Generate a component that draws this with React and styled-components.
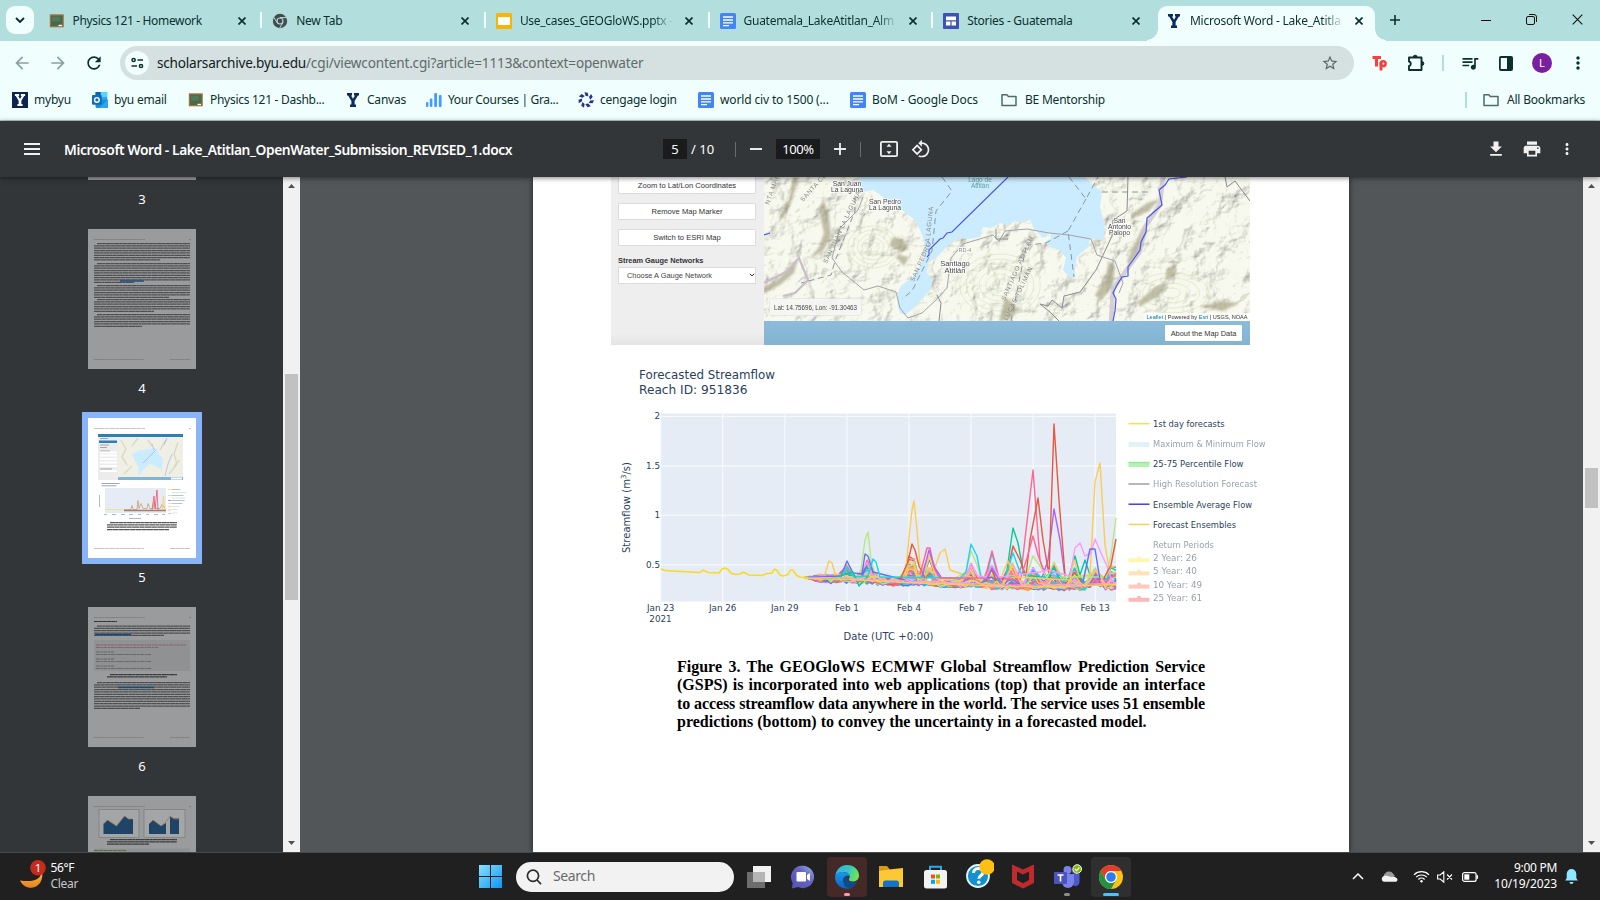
import React from 'react';
import styled, { createGlobalStyle, css } from 'styled-components';

const UI = '"Noto Sans", "Open Sans", sans-serif';
const DARK = '#0b302e';

const Global = createGlobalStyle`
  * { box-sizing: border-box; }
  body { margin: 0; overflow: hidden; font-family: ${UI}; }
  svg { display: block; flex: none; }
`;

const Screen = styled.div`
  width: 1600px;
  height: 900px;
  display: flex;
  flex-direction: column;
  overflow: hidden;
  background: #525659;
`;

/* A single line of text in a box of known width */
const Text = styled.span`
  flex: none;
  width: ${(p) => (p.$w ? `${p.$w}px` : 'auto')};
  white-space: nowrap;
  font-size: ${(p) => p.$size || 12}px;
  letter-spacing: ${(p) => p.$ls || 0}px;
  color: ${(p) => p.$color || DARK};
  line-height: 1.3;
  ${(p) => p.$fade && css`
    mask-image: linear-gradient(90deg, #000 86%, transparent 100%);
  `}
`;

/* ---------- tab strip ---------- */
const TabStrip = styled.div`
  height: 41px;
  flex: none;
  display: flex;
  background: #b2dfdd;
  padding-left: 6px;
`;
const TabSearch = styled.div`
  width: 28px;
  height: 28px;
  flex: none;
  margin: 6px 3.5px 0 0;
  border-radius: 9px;
  background: #f0fffe;
  display: flex;
  align-items: center;
  justify-content: center;
`;
const Tab = styled.div`
  position: relative;
  flex: none;
  width: ${(p) => (p.$active ? 217 : 223.7)}px;
  height: ${(p) => (p.$active ? 35 : 28)}px;
  margin-top: 6px;
  margin-left: ${(p) => (p.$active ? 2 : 0)}px;
  padding: 1px 12px 0 ${(p) => (p.$active ? 8 : 11)}px;
  display: flex;
  align-items: center;
  ${(p) => p.$active && css`
    background: #f0fffe;
    border-radius: 9px 9px 0 0;
    padding-bottom: 7px;
    &::before, &::after {
      content: '';
      position: absolute;
      bottom: 0;
      width: 11px;
      height: 12px;
    }
    &::before { left: -11px; background: radial-gradient(circle at 0 0, transparent 10.5px, #f0fffe 11px); }
    &::after { right: -11px; background: radial-gradient(circle at 100% 0, transparent 10.5px, #f0fffe 11px); }
  `}
`;
const TabIcon = styled.div`
  width: 16px;
  height: 16px;
  margin-right: 8px;
  flex: none;
`;
const TabClose = styled.div`
  margin-left: auto;
  width: 12px;
  flex: none;
  margin-right: ${(p) => (p.$active ? -4 : -0.5)}px;
`;
const TabRule = styled.div`
  position: absolute;
  right: -1px;
  top: 6px;
  width: 2px;
  height: 16px;
  background: #f0fffe;
`;
const NewTab = styled.div`
  width: 10px;
  flex: none;
  margin: 15px 63px 0 15px;
`;
const WindowButton = styled.div`
  width: 46px;
  flex: none;
  padding-top: 14px;
  display: flex;
  justify-content: center;
`;

/* ---------- navigation bar ---------- */
const NavBar = styled.div`
  height: 39px;
  flex: none;
  display: flex;
  align-items: center;
  background: #f0fffe;
  padding: 5px 0 0 12px;
`;
const NavIcon = styled.div`
  flex: none;
  width: ${(p) => p.$w || 36}px;
  display: flex;
  justify-content: ${(p) => p.$align || 'flex-start'};
`;
const Omnibox = styled.div`
  width: 1234px;
  flex: none;
  height: 34px;
  border-radius: 17px;
  background: #d5e1e0;
  display: flex;
  align-items: center;
  padding: 0 15px 0 5px;
`;
const SiteInfo = styled.div`
  width: 24px;
  height: 24px;
  border-radius: 50%;
  background: #f0fffe;
  margin-right: 8px;
  display: flex;
  align-items: center;
  justify-content: center;
`;
const StarSlot = styled.div`
  margin-left: auto;
`;
const Rule = styled.div`
  width: 2px;
  height: 16px;
  background: #b2dfdd;
`;
const Avatar = styled.div`
  width: 20px;
  height: 20px;
  border-radius: 50%;
  background: #7b1fa2;
  color: #fff;
  font-size: 11px;
  line-height: 20px;
  text-align: center;
`;

/* ---------- bookmarks ---------- */
const BookmarkBar = styled.div`
  height: 41px;
  flex: none;
  display: flex;
  align-items: center;
  padding: 0 14px 1px 12px;
  background: #f0fffe;
  border-bottom: 1px solid #b5cfcd;
`;
const Bookmark = styled.div`
  display: flex;
  align-items: center;
  gap: ${(p) => p.$gap || 6}px;
  margin-right: 21px;
`;
const BookmarkEnd = styled.div`
  margin-left: auto;
  display: flex;
  align-items: center;
  gap: 8px;
  ${Rule} { margin-right: 8px; }
`;

/* ---------- PDF viewer ---------- */
const PdfBar = styled.div`
  height: 56px;
  flex: none;
  display: flex;
  align-items: center;
  background: #323639;
  padding: 0 24px;
  box-shadow: 0 1px 5px rgba(0, 0, 0, 0.5);
  z-index: 2;
`;
const PdfTitle = styled.div`
  width: 599px;
  margin-left: 24px;
`;
const PdfTitleText = styled(Text)`
  font-weight: 600;
`;
const PdfField = styled.div`
  width: ${(p) => p.$w}px;
  height: 20px;
  background: #191b1c;
  display: flex;
  align-items: center;
  justify-content: center;
`;
const PdfRule = styled.div`
  width: 1px;
  height: 15px;
  margin: 0 ${(p) => p.$r}px 0 ${(p) => p.$l}px;
  background: #6a6d70;
`;
const PdfActions = styled.div`
  margin-left: auto;
  display: flex;
  align-items: center;
  gap: 16px;
`;
const Gap = styled.div`
  width: ${(p) => p.$w}px;
`;

const Viewer = styled.div`
  flex: 1;
  min-height: 0;
  display: flex;
`;
const ThumbRail = styled.div`
  width: 284px;
  margin-right: -1px;
  background: #323639;
  overflow: hidden;
  display: flex;
  flex-direction: column;
  align-items: center;
`;
const ThumbCell = styled.div`
  height: 189px;
  flex: none;
  display: flex;
  flex-direction: column;
  align-items: center;
  margin-top: ${(p) => p.$shift || 0}px;
`;
const ThumbPage = styled.div`
  width: 108px;
  height: 140px;
  background: ${(p) => (p.$current ? '#fff' : '#999b9c')};
  ${(p) => p.$current && css`box-shadow: 0 0 0 6px #8ab4f8;`}
`;
const ThumbLabel = styled.div`
  height: 49px;
  padding-top: 10px;
  font-size: 13px;
  line-height: 19px;
  color: #fff;
`;
const ScrollTrack = styled.div`
  width: 17px;
  flex: none;
  position: relative;
  background: #f1f1f1;
  display: flex;
  flex-direction: column;
  align-items: center;
  justify-content: space-between;
  padding: 7px 0;
`;
const ScrollThumb = styled.div`
  width: 13px;
  height: ${(p) => p.$h}px;
  margin-top: ${(p) => p.$top}px;
  margin-bottom: auto;
  background: #c1c1c1;
`;
const Canvas = styled.div`
  flex: 1;
  background: #525659;
  overflow: hidden;
  padding-left: 233px;
`;
const Paper = styled.div`
  width: 816px;
  height: 675px;
  background: #fff;
  box-shadow: 0 0 6px rgba(0, 0, 0, 0.6);
  padding-left: 78px;
`;

/* ---------- figure: web map ---------- */
const MapApp = styled.div`
  width: 639px;
  height: 168px;
  display: flex;
  font-family: "Liberation Sans", Arial, sans-serif;
`;
const MapSide = styled.div`
  width: 153px;
  height: 168px;
  overflow: hidden;
  background: linear-gradient(#eeeeee 93%, #e4e4e4);
  padding: 0 8px 0 7px;
  display: flex;
  flex-direction: column;
`;
const MapButton = styled.div`
  height: 17px;
  flex: none;
  margin-bottom: 9px;
  background: #fff;
  border: 1px solid #dcdcdc;
  border-radius: 1px;
  font-size: 7.6px;
  line-height: 15px;
  text-align: center;
  color: #333;
  ${(p) => p.$first && css`border-top: 0; height: 16.5px; line-height: 17.5px;`}
`;
const MapLabel = styled.div`
  font-size: 7.4px;
  font-weight: bold;
  line-height: 9px;
  margin-top: 1px;
  color: #333;
`;
const MapSelect = styled.div`
  height: 17px;
  flex: none;
  margin-top: 2px;
  background: #fff;
  border: 1px solid #dcdcdc;
  font-size: 7.4px;
  line-height: 15px;
  color: #444;
  padding: 0 0 0 8px;
  display: flex;
  align-items: center;
  justify-content: space-between;
`;
const MapMain = styled.div`
  width: 486px;
`;
const MapFooter = styled.div`
  height: 24px;
  background: linear-gradient(#8bbcdb, #82b4d2);
  display: flex;
  align-items: center;
  justify-content: flex-end;
  padding-right: 8px;
`;
const AboutButton = styled.div`
  width: 77px;
  height: 16px;
  border-radius: 1px;
  background: #fff;
  font-size: 7.4px;
  line-height: 17px;
  text-align: center;
  color: #333;
`;

const Caption = styled.p`
  width: 528px;
  margin: 7px 0 0 66px;
  font: bold 16px/18.4px "Liberation Serif", "Times New Roman", serif;
  color: #000;
`;
const CaptionLine = styled.span`
  display: block;
  white-space: nowrap;
  letter-spacing: ${(p) => (p.$tight ? -0.11 : 0)}px;
  text-align: justify;
  text-align-last: ${(p) => (p.$last ? 'left' : 'justify')};
`;

/* ---------- taskbar ---------- */
const Taskbar = styled.div`
  height: 48px;
  flex: none;
  display: flex;
  align-items: center;
  background: #202020;
  border-top: 1px solid #474747;
`;
const Weather = styled.div`
  width: 470px;
  display: flex;
  align-items: center;
  padding-left: 18px;
  gap: 4.5px;
`;
const Stack = styled.div`
  display: flex;
  flex-direction: column;
  padding-bottom: 2px;
  align-items: ${(p) => p.$align || 'flex-start'};
`;
const StartSlot = styled.div`
  width: 46px;
  padding-left: 9px;
`;
const SearchPill = styled.div`
  width: 218px;
  height: 30px;
  border-radius: 15px;
  background: #f2f2f2;
  display: flex;
  align-items: center;
  padding-left: 10px;
  gap: 11px;
  margin-right: 5px;
`;
const TaskItem = styled.div`
  position: relative;
  width: 40px;
  height: 40px;
  margin-right: 4px;
  border-radius: 4px;
  display: flex;
  align-items: center;
  justify-content: center;
  background: ${(p) => p.$bg || 'transparent'};
  ${(p) => p.$mark && css`
    &::after {
      content: '';
      position: absolute;
      bottom: 1px;
      left: 50%;
      width: ${p.$mw || 6}px;
      height: 3px;
      margin-left: -${(p.$mw || 6) / 2}px;
      border-radius: 2px;
      background: ${p.$mark};
    }
  `}
`;
const Tray = styled.div`
  margin-left: auto;
  display: flex;
  align-items: center;
  padding-right: 22px;
`;

/* ---------- icons ---------- */
const Glyph = ({ d, size = 20, fill = DARK }) => (
  <svg width={size} height={size} viewBox="0 0 24 24" fill={fill}><path d={d} /></svg>
);
const PATH = {
  back: 'M20 11H7.83l5.59-5.59L12 4l-8 8 8 8 1.41-1.41L7.83 13H20v-2z',
  forward: 'M12 4l-1.41 1.41L16.17 11H4v2h12.17l-5.58 5.59L12 20l8-8z',
  reload: 'M17.65 6.35C16.2 4.9 14.21 4 12 4c-4.42 0-7.99 3.58-7.99 8s3.57 8 7.99 8c3.73 0 6.84-2.55 7.73-6h-2.08c-.82 2.33-3.04 4-5.65 4-3.31 0-6-2.69-6-6s2.69-6 6-6c1.66 0 3.14.69 4.22 1.78L13 11h7V4l-2.35 2.35z',
  star: 'M22 9.24l-7.19-.62L12 2 9.19 8.63 2 9.24l5.46 4.73L5.82 21 12 17.27 18.18 21l-1.63-7.03L22 9.24zM12 15.4l-3.76 2.27 1-4.28-3.32-2.88 4.38-.38L12 6.1l1.71 4.04 4.38.38-3.32 2.88 1 4.28L12 15.4z',
  queue: 'M15 6H3v2h12V6zm0 4H3v2h12v-2zM3 16h8v-2H3v2zM17 6v8.18c-.31-.11-.65-.18-1-.18-1.66 0-3 1.34-3 3s1.34 3 3 3 3-1.34 3-3V8h3V6h-5z',
  download: 'M19 9h-4V3H9v6H5l7 7 7-7zM5 18v2h14v-2H5z',
  print: 'M19 8H5c-1.66 0-3 1.34-3 3v6h4v4h12v-4h4v-6c0-1.66-1.34-3-3-3zm-3 11H8v-5h8v5zm3-7c-.55 0-1-.45-1-1s.45-1 1-1 1 .45 1 1-.45 1-1 1zm-1-9H6v4h12V3z',
  rotate: 'M7.34 6.41L.86 12.9l6.49 6.48 6.49-6.48-6.5-6.49zM3.69 12.9l3.66-3.66L11 12.9l-3.66 3.66-3.65-3.66zm15.67-6.26C17.61 4.88 15.3 4 13 4V.76L8.76 5 13 9.24V6c1.79 0 3.58.68 4.95 2.05 2.73 2.73 2.73 7.17 0 9.9C16.58 19.32 14.79 20 13 20c-.97 0-1.94-.21-2.84-.61l-1.49 1.49C10.02 21.62 11.51 22 13 22c2.3 0 4.61-.88 6.36-2.64 3.52-3.51 3.52-9.21 0-12.72z',
  dots: 'M12 8c1.1 0 2-.9 2-2s-.9-2-2-2-2 .9-2 2 .9 2 2 2zm0 2c-1.1 0-2 .9-2 2s.9 2 2 2 2-.9 2-2-.9-2-2-2zm0 6c-1.1 0-2 .9-2 2s.9 2 2 2 2-.9 2-2-.9-2-2-2z',
};

const Board = () => (
  <svg width="16" height="16" viewBox="0 0 16 16">
    <rect x=".8" y="1.3" width="14" height="13" fill="#a9713f" />
    <rect x="2" y="2.6" width="11.6" height="10.4" fill="#466b4b" />
    <rect x="3" y="3.6" width="8" height="5" fill="#54785a" />
    <rect x="9.5" y="11.8" width="3.5" height="1.3" fill="#fff" />
  </svg>
);
const ChromeGray = () => (
  <svg width="16" height="16" viewBox="0 0 16 16">
    <circle cx="8" cy="8" r="7.2" fill="#474a4d" />
    <path d="M8 4.6h6.6M5.1 9.7L1.9 4.2M10.9 9.7l-3.3 5.5" stroke="#b2dfdd" strokeWidth="1" />
    <circle cx="8" cy="8" r="3.5" fill="#b2dfdd" />
    <circle cx="8" cy="8" r="2.4" fill="#474a4d" />
  </svg>
);
const Slides = () => (
  <svg width="16" height="16" viewBox="0 0 16 16">
    <rect width="16" height="16" rx="1.5" fill="#f8b400" />
    <rect x="2" y="4" width="12" height="8" fill="#fff" />
  </svg>
);
const Docs = () => (
  <svg width="16" height="16" viewBox="0 0 16 16">
    <rect width="16" height="16" rx="1.5" fill="#4285f4" />
    <path d="M3 4h10M3 7h10M3 9.9h10M3 12.6h6" stroke="#fff" strokeWidth="1.4" />
  </svg>
);
const Sites = () => (
  <svg width="16" height="16" viewBox="0 0 16 16">
    <rect width="16" height="16" rx="1" fill="#3f51b5" />
    <path d="M3 3.5h10v3.8H3zM3 8.6h4.4v4H3zM8.6 8.6H13v4H8.6z" fill="#fff" />
  </svg>
);
const YShape = ({ fill, transform }) => (
  <path transform={transform} fill={fill} d="M2 1h5v2.4H6l2 3.4 2-3.4H9V1h5v2.4h-1.1L9.6 9v3.6H11V15H5v-2.4h1.4V9L3.1 3.4H2z" />
);
const YLogo = () => <svg width="16" height="16" viewBox="0 0 16 16"><YShape fill="#0b2a5e" /></svg>;
const YBox = () => (
  <svg width="16" height="16" viewBox="0 0 16 16">
    <rect width="16" height="16" fill="#0b2452" />
    <YShape fill="#fff" transform="translate(1.2 1.2) scale(.85)" />
  </svg>
);
const Outlook = () => (
  <svg width="16" height="16" viewBox="0 0 16 16">
    <path d="M3.5 0h11.7v9H3.5z" fill="#28a8ea" />
    <path d="M3.5 0h5v5h-5z" fill="#0a64ad" />
    <path d="M9 0h6.2v5H9z" fill="#50d9ff" />
    <path d="M3.5 8.5L16 7.6V16H4.5l-1-1z" fill="#1490df" />
    <path d="M16 7.6L7 16h9z" fill="#28a8ea" />
    <rect y="3" width="9.8" height="9.8" rx="1" fill="#0f6cbd" />
    <circle cx="4.9" cy="7.9" r="2.3" fill="none" stroke="#fff" strokeWidth="1.4" />
  </svg>
);
const Bars = () => (
  <svg width="16" height="16" viewBox="0 0 16 16" fill="#459bff">
    <rect y="10" width="2.4" height="5" rx="1" /><rect x="3.8" y="6.5" width="2.6" height="8.5" rx="1" />
    <rect x="8.2" y="1" width="2.8" height="14" rx="1" /><rect x="12.8" y="3" width="2.8" height="12" rx="1" />
  </svg>
);
const Cengage = () => (
  <svg width="16" height="16" viewBox="-8 -8 16 16">
    {[0, 51.4, 102.8, 154.3, 205.7, 257.1, 308.6].map((a) => (
      <path key={a} transform={`rotate(${a})`} d="M-1.600 -7.800L1.800 -7.200L2.400 -3.400L-.4 -4.200z" fill="#2d3282" />
    ))}
  </svg>
);
const Folder = () => (
  <svg width="16" height="16" viewBox="0 0 16 16" fill="none" stroke="#4d6b68" strokeWidth="1.5">
    <path d="M1 2.7h4.8l1.6 1.8H15v9H1z" strokeLinejoin="round" />
  </svg>
);
const Cross = ({ size = 8, stroke = DARK, w = 1.7 }) => (
  <svg width={size} height={size} viewBox="0 0 8 8"><path d="M.5 .5l7 7M7.5 .5l-7 7" stroke={stroke} strokeWidth={w} /></svg>
);
const Plus = ({ size, stroke, w }) => (
  <svg width={size} height={size} viewBox="0 0 12 12"><path d="M6 0v12M0 6h12" stroke={stroke} strokeWidth={w} /></svg>
);
const Arrow = ({ up }) => (
  <svg width="7" height="4" viewBox="0 0 7 4"><path d={up ? 'M0 4L3.5 0L7 4z' : 'M0 0h7L3.5 4z'} fill="#505050" /></svg>
);

/* ---------- map drawing ---------- */
const LAKE = 'M247 0V10L252 15L262 13L272 20L280 27L291 33L304 43L309 53L312 60L314 73L312 83L307 92L302 100L295 105L289 110L286 120L287 130L289 136L294 138L299 134L306 128L313 120L319 113L322 103L316 96L317 86L326 80L331 75L336 70L342 64L349 61L358 62L369 60L372 50L380 51L389 46L396 48L404 44L412 46L419 43L424 53L432 61L439 58L440 61L434 66L442 71L449 73L455 81L452 93L459 101L464 100L464 90L466 80L471 75L477 70L479 62L491 63L494 53L492 42L489 30L491 15L482 8L474 0z';

const MapDrawing = () => (
  <svg width="486" height="144" viewBox="153 0 486 144" fontFamily="Liberation Sans, Arial, sans-serif">
    <defs>
      <filter id="relief" x="0" y="0" width="100%" height="100%">
        <feTurbulence type="fractalNoise" baseFrequency="0.04 0.045" numOctaves="5" seed="11" result="n" />
        <feDiffuseLighting in="n" surfaceScale="9" lightingColor="#fffff8" diffuseConstant="1.36">
          <feDistantLight azimuth="215" elevation="52" />
        </feDiffuseLighting>
      </filter>
      <filter id="soften"><feGaussianBlur stdDeviation="1.300" /></filter>
      <clipPath id="mapclip"><rect x="153" y="0" width="486" height="144" /></clipPath>
    </defs>
    <g clipPath="url(#mapclip)">
      <rect x="153" width="486" height="144" fill="#f7f8ee" />
      <rect x="153" width="486" height="144" filter="url(#relief)" opacity=".42" style={{ mixBlendMode: 'multiply' }} />
      <g fill="none" stroke="#d6e2bb" strokeWidth=".6">
        {[6, 11, 16, 21, 26, 31].map((r) => <ellipse key={r} cx="389" cy="108" rx={r * 1.3} ry={r} />)}
        {[5, 9, 13, 17, 21].map((r) => <ellipse key={r} cx="262" cy="70" rx={r * 1.2} ry={r} />)}
        {[5, 10, 15, 20].map((r) => <ellipse key={r} cx="560" cy="116" rx={r * 1.9} ry={r} />)}
      </g>
      <g fill="#9c9877" opacity=".6" filter="url(#soften)">
        <path d="M212 22l6 16 2 22-8 14-14 8 10-12 5-14-4-18z" />
        <path d="M153 110l14-8 12-12 8-8-4 14-14 12-16 8z" />
        <path d="M516 84l8-18 8-16 4 4-6 20-12 14zM522 36l14-10 12-4-10 12-18 8z" />
        <path d="M484 118l10-16 4-18 6 6-2 18-12 16zM528 124l16-14 14-4-12 14-18 10zM590 130l20-6 18 2-16 8zM394 120l12 10-6 12-12 2zM168 40l10-18 4-22 6 0-8 26-8 16z" />
        <path d="M282 60l10 2 6 10-8 2-12-5zM288 78l10 2-5 9-8-9zM206 126l18-6 4 12-24 8zM556 92l10-6-4 14-8 4z" />
      </g>
      <path d={LAKE} fill="#cbebff" />
      <circle cx="438" cy="58" r="2" fill="#f1f3e3" />
      <path d="M153 106L175 95L188 81L197 103L184 116L172 119M201 144l4-4" fill="none" stroke="#c9bccb" strokeWidth="2.2" />
      <path d="M552 0L549 28L534 50L528 76L514 95L502 112L500 144" fill="none" stroke="#cdc6d0" strokeWidth="4.5" opacity=".8" />
      <g fill="none" stroke="#a6a4aa" strokeWidth="1">
        <path d="M252 20l-5 13-18 18-8 30 10 14 22 18 14-4 18 6 4 16 8 10 14-5 14-13 11-12 4-30 12-14 30-9 6 6 6-10 22-2 22 4 20 2 22 4 6 16 18 6 8 22-4 10" />
        <path d="M326 118l4 8-2 18M385 52v10h12M517 0l-1 34-14 9-1 16-16 34-16 22-16 4-2 12-10-8-4 6-8-2 10 8 8 8 8 9M614 0l2 10 8-6 15 20" stroke="#8b8b90" />
      </g>
      <g fill="none" stroke="#8796a0" strokeWidth="1" strokeDasharray="6 4">
        <path d="M331 0l10 14-16 20-4 40-20 40-10 8" />
        <path d="M458 0l17 22 12-22M475 22l-18 32 6 46M457 54l-22 12-18 2M491 15h48M244 20v14l-20 50-4 14-30 8M400 144l15-74" />
      </g>
      <g fill="none" stroke="#4a55e8" strokeWidth="1.2">
        <path d="M397 0L341 55L336 56L332 61L329 62L318 73V78L316 80M153 58l6-2" />
        <path d="M576 0L558 2L554 8L548 13L551 28L543 35L536 41L535 55L530 65L529 73L522 83L517 90V99L511 100L506 108L502 116L505 122L504 134L502 144" />
      </g>
      <g fontSize="6.8" fill="#454545" textAnchor="middle" stroke="#fff" strokeWidth="1.4" paintOrder="stroke" strokeLinejoin="round">
        <text x="236" y="9">San Juan</text><text x="236" y="15">La Laguna</text>
        <text x="274" y="26.500">San Pedro</text><text x="274" y="32.500">La Laguna</text>
        <text x="344" y="89" fontSize="7.500">Santiago</text><text x="344" y="96" fontSize="7.500">Atitlán</text>
        <text x="508.500" y="45.500">San</text><text x="508.500" y="51.500">Antonio</text><text x="508.500" y="57.800">Palopo</text>
        <text x="354" y="75" fontSize="5.500" fill="#888">RD-4</text>
      </g>
      <g fontSize="6.500" fill="#5f9ea0" textAnchor="middle"><text x="369" y="4.500">Lago de</text><text x="369" y="10.800">Atitlán</text></g>
      <g fontSize="6.400" fill="#8a8a8a" letterSpacing=".6">
        <text transform="translate(216 87) rotate(-65)">SAN JUAN LA LAGUNA</text>
        <text transform="translate(303 105) rotate(-66)">SAN PEDRO</text>
        <text transform="translate(318 70) rotate(-84)">LA LAGUNA</text>
        <text transform="translate(158 28) rotate(-70)">NTA MAR</text>
        <text transform="translate(192 25) rotate(-48)">SANTA CL</text>
        <text transform="translate(394 124) rotate(-66)">SANTIAGO ATITLÁN</text>
        <text transform="translate(396 144) rotate(-64)">LUCAS TOLIMÁN</text>
      </g>
      <rect x="158.500" y="121.500" width="92" height="17" rx="1" fill="#f6f6f4" opacity=".95" stroke="#ddd" strokeWidth=".5" />
      <text x="163" y="132.800" fontSize="6.800" fill="#444" textLength="83" lengthAdjust="spacingAndGlyphs">Lat: 14.75696, Lon: -91.30463</text>
      <rect x="533" y="136" width="106" height="8" fill="#fff" opacity=".75" />
      <text x="535.500" y="142.300" fontSize="6.200" fill="#333" textLength="101" lengthAdjust="spacingAndGlyphs"><tspan fill="#0078a8">Leaflet</tspan> | Powered by <tspan fill="#0078a8">Esri</tspan> | USGS, NOAA</text>
    </g>
  </svg>
);

/* ---------- forecast chart ---------- */
const INK = '#2a3f5f';
const COLORS = ['#636efa', '#ef553b', '#00cc96', '#ab63fa', '#ffa15a', '#19d3f3', '#ff6692', '#b6e880', '#ff97ff', '#fecb52'];
const yOf = (v) => 416.5 + (2 - v) * 98.8;

const seeded = (seed) => {
  let s = seed;
  return () => {
    s = (s * 1664525 + 1013904223) % 4294967296;
    return s / 4294967296;
  };
};
/* [3-hour step, spread] around each daily surge */
const SURGES = [[16, 0.13], [24, 0.2], [41, 0.32], [48, 0.28], [64, 0.19], [72, 0.2], [80, 0.24], [88, 0.19], [96, 0.22], [104, 0.17], [112, 0.18], [119, 0.24]];
const spreadAt = (i) => SURGES.reduce((m, [p, a]) => Math.max(m, a * Math.max(0, 1 - Math.abs(i - p) / 4)), 0);
const ensembles = Array.from({ length: 50 }, (_, k) => {
  const rnd = seeded(k * 7919 + 13);
  const bias = rnd() * 0.03 - 0.015;
  const tall = Array.from({ length: 16 }, () => rnd() ** 2.4);
  const pts = [];
  for (let i = 0; i <= 120; i += 2) {
    const x = 805 + i * 2.592;
    const grow = Math.min(1, i / 6);
    const base = 0.37 - 0.085 * Math.min(1, i / 80);
    const v = base + grow * (bias + (rnd() - 0.5) * 0.07 + spreadAt(i) * tall[Math.round(i / 8)]);
    pts.push(`${x.toFixed(1)},${yOf(v).toFixed(1)}`);
  }
  return { color: COLORS[k % 10], points: pts.join(' ') };
});

const HIGHLIGHTS = [
  ['#fecb52', '805,577 824,577 829,561 832,563 836,577 905,577 910,528 912,510 914,501 917,530 920,565 933,573 940,553 945,549 950,570 980,580'],
  ['#b6e880', '805,578 860,577 865,540 868,532 871,560 876,577 955,578 966,572 971,551 977,565 982,580'],
  ['#636efa', '805,577 841,576 847,561 853,573 862,574 865,554 868,556 873,572 905,580'],
  ['#19d3f3', '840,578 847,567 854,577 868,576 873,559 876,562 880,577 960,578 966,572 971,544 977,556 981,577 986,578 992,553 998,577'],
  ['#ef553b', '900,580 908,562 912,544 915,550 919,566 925,578'],
  ['#ff6692', '920,575 927,548 930,548 934,568 940,578 985,578 992,551 999,578 1016,580 1022,565 1033,470 1040,560 1046,578'],
  ['#ab63fa', '922,577 929,550 935,568 941,577'],
  ['#ab63fa', '1042,578 1048,560 1054,509 1060,540 1065,577'],
  ['#00cc96', '1002,580 1007,570 1013,528 1018,543 1024,575 1068,580 1075,556 1080,575 1085,560 1090,575'],
  ['#ef553b', '1002,580 1008,570 1013,546 1020,560 1026,576 1030,540 1038,498 1043,540 1049,575 1054,424 1059,500 1065,575'],
  ['#ff6692', '1020,580 1027,558 1033,536 1038,555 1046,577'],
  ['#19d3f3', '1005,578 1013,553 1020,572 1028,578 1033,570 1042,578 1054,572 1066,579'],
  ['#b6e880', '1026,578 1033,556 1040,566 1047,578 1054,562 1062,577 1106,577 1111,555 1116,518'],
  ['#fecb52', '1002,575 1008,561 1015,577 1070,580 1074,560 1079,576 1090,575 1095,482 1100,463 1105,545 1110,574 1116,572'],
  ['#ff97ff', '966,577 971,563 978,576 986,577 992,565 999,577 1040,572 1048,570 1070,576 1075,548 1080,543 1085,556 1091,553 1095,539 1101,553 1107,566 1112,582'],
  ['#636efa', '1083,582 1090,549 1095,549 1100,580'],
  ['#ef553b', '1104,578 1111,565 1116,539'],
  ['#00cc96', '805,577 830,579 853,572 859,586 868,576'],
];
const CORE = 'M805,577L850,578L905,581L960,583L1010,585L1060,585L1116,583';

const XTICKS = [['Jan 23', 660.7], ['Jan 26', 722.7], ['Jan 29', 784.8], ['Feb 1', 846.9], ['Feb 4', 909], ['Feb 7', 971], ['Feb 10', 1033.1], ['Feb 13', 1095.2]];
const YTICKS = [['2', 416.5], ['1.5', 465.9], ['1', 515.3], ['0.5', 564.7]];
const LEGEND = [
  { t: '1st day forecasts', y: 424, w: 71.5, on: true, line: '#fde032' },
  { t: 'Maximum & Minimum Flow', y: 444, w: 112.5, band: '#e3f2f8' },
  { t: '25-75 Percentile Flow', y: 464, w: 90.5, on: true, band: '#b4f2b4', line: '#90ee90' },
  { t: 'High Resolution Forecast', y: 484.3, w: 104, line: '#999' },
  { t: 'Ensemble Average Flow', y: 504.5, w: 99, on: true, line: '#2f2fff' },
  { t: 'Forecast Ensembles', y: 524.7, w: 83, on: true, line: '#fecb52' },
  { t: 'Return Periods', y: 545, w: 61 },
  { t: '2 Year: 26', y: 558.2, w: 44, band: '#fff7b0', dot: true },
  { t: '5 Year: 40', y: 571.4, w: 44, band: '#ffe2b8', dot: true },
  { t: '10 Year: 49', y: 584.6, w: 49, band: '#ffc8bd', dot: true },
  { t: '25 Year: 61', y: 597.8, w: 49, band: '#ffb8b8', dot: true },
];

const Chart = () => (
  <svg width="672" height="306" viewBox="611 345 672 306" fontFamily="DejaVu Sans, Verdana, sans-serif" fill={INK}>
    <text x="639" y="379" fontSize="12" textLength="136" lengthAdjust="spacingAndGlyphs">Forecasted Streamflow</text>
    <text x="639" y="394.300" fontSize="12" textLength="108.500" lengthAdjust="spacingAndGlyphs">Reach ID: 951836</text>
    <rect x="660.700" y="413.500" width="455.300" height="188" fill="#e5ecf6" />
    <g stroke="#f6f9fd" strokeWidth="1.200">
      {XTICKS.map(([t, x]) => <path key={t} d={`M${x} 413.500V601.500`} />)}
      {YTICKS.map(([t, y]) => <path key={t} d={`M660.700 ${y}H1116`} />)}
    </g>
    <g fill="none" strokeWidth="1.400" strokeLinejoin="round">
      {ensembles.map((e, i) => <polyline key={i} points={e.points} stroke={e.color} />)}
      {HIGHLIGHTS.map(([c, p], i) => <polyline key={i} points={p} stroke={c} />)}
      <path d={CORE} stroke="#ff97ff" strokeWidth="1" />
      <path d={CORE} transform="translate(0 1.500)" stroke="#fecb52" />
      <polyline stroke="#fada1e" strokeWidth="1.500" points="661,569 665,570.500 672,571 700,572.500 703,570 708,572.500 719,573 722,569 725,568 728,569.500 731,573 735,574.500 740,574 743.500,572 749,575 762,575.500 767,573.500 772,573 774.500,569 777,570.500 780,575 783,576 788,574.500 790.500,570 793,570 796,575 800,577 808,577.500" />
    </g>
    <g fontSize="8.800" textAnchor="middle">
      {XTICKS.map(([t, x]) => <text key={t} x={x} y="610.500">{t}</text>)}
      <text x="660.500" y="621.500">2021</text>
    </g>
    <g fontSize="8.800" textAnchor="end">
      {YTICKS.map(([t, y]) => <text key={t} x="660" y={y + 2.9}>{t}</text>)}
    </g>
    <text x="888.500" y="640.300" fontSize="10" textAnchor="middle" textLength="90">Date (UTC +0:00)</text>
    <text transform="translate(630 553) rotate(-90)" fontSize="10" textLength="91">Streamflow (m<tspan fontSize="7" dy="-4">3</tspan><tspan dy="4">/s)</tspan></text>
    {LEGEND.map((l) => (
      <g key={l.t}>
        {l.band && <rect x="1128.500" y={l.y - (l.dot ? 0 : 2)} width="21" height={l.dot ? 4 : 5} fill={l.band} />}
        {l.line && <path d={`M1128.500 ${l.y - (l.band ? 1.5 : 0.3)}h21`} stroke={l.line} strokeWidth="1.400" />}
        {l.dot && <circle cx="1139" cy={l.y} r="2" fill={l.band} />}
        <text x="1153" y={l.y + 3} fontSize="8.800" opacity={l.on ? 1 : 0.5} textLength={l.w} lengthAdjust="spacingAndGlyphs">{l.t}</text>
      </g>
    ))}
  </svg>
);

/* ---------- thumbnails ---------- */
const Lines = ({ y, n, step = 2.35, x = 6, w = 96, last = 50, opacity = 0.6 }) => (
  <g stroke="#1c1c1c" strokeWidth="1.250" opacity={opacity}>
    {Array.from({ length: n }, (_, i) => (
      <path key={i} strokeDasharray={`${5 + (i % 3)} .25 ${3 + (i % 4)} .3`} d={`M${x + (i ? 0 : 3)} ${y + i * step}H${i === n - 1 ? x + last : x + w}`} />
    ))}
  </g>
);
const ThumbFrame = ({ children, light }) => (
  <svg width="108" height="140" viewBox="0 0 108 140">
    <path d="M6 10.500h51M101 10.500h2M6 130.500h50M82 130.500h20" stroke={light ? '#c4c4c4' : '#808283'} strokeWidth="1" strokeDasharray="4 .4 6 .4" />
    {children}
  </svg>
);
const Thumb4 = () => (
  <ThumbFrame>
    <Lines y={14.5} n={8} last={66} /><Lines y={34.5} n={9} last={40} /><Lines y={56.5} n={6} last={75} />
    <Lines y={70.5} n={6} last={60} /><Lines y={85.5} n={6} last={48} />
    <path d="M32 52h24" stroke="#174a80" strokeWidth="1.400" />
  </ThumbFrame>
);
const Thumb5 = () => (
  <ThumbFrame light>
    <rect x="10" y="16" width="85" height="3" fill="#2d7fb8" />
    <rect x="10" y="19" width="20" height="43" fill="#ececec" />
    <rect x="11" y="22.500" width="18" height="2.500" fill="#2d7fb8" />
    <path d="M12 20.500h8M12 27h9M12 29.500h7M12 33h10M12 51h12" stroke="#8a8a8a" strokeWidth=".7" />
    <path d="M12 34.500h17M12 37.500h17M12 41h17M12 44.500h17M12 48h17M12 53h17" stroke="#fff" strokeWidth="1.800" />
    <rect x="30" y="19" width="65" height="40" fill="#efefe4" />
    <path d="M33 22l5 9-4 8 5 8M44 48l-8 8M78 22l-6 10M90 24l-4 12 3 10-8 10M60 22l4 6M50 20l-6 8M86 48l6-6" stroke="#dcdac6" strokeWidth="1.500" fill="none" />
    <path d="M44 36l8-4 10-1 6-1 3 6 4 5-1 11-4-3-8-3-4 3-5 6-3 2 1-7-5-9z" fill="#cbebff" />
    <path d="M68 32L55 45M66 32l-2-6M79 20l-3 7M84 36l-4 10-3 12" stroke="#8b95ea" strokeWidth=".5" fill="none" />
    <rect x="30" y="59" width="65" height="3" fill="#7fb4d6" /><rect x="83" y="59.500" width="11" height="2" fill="#fff" />
    <path d="M13.500 65.500h18M13.500 67.800h15" stroke="#9aa6b8" strokeWidth="1" />
    <rect x="17" y="70" width="61" height="25" fill="#e5ecf6" />
    <path d="M11.500 77v12" stroke="#b4bdca" strokeWidth="1" />
    <path d="M17 91.500h20" stroke="#f0d860" strokeWidth=".6" />
    <path d="M36 92l7-.5 1-4 1 4h4l1-9 1 8 2-5 2 5h4l1-5 2 5h3l1-6 2 6h4l2-4 3 4" stroke="#c09a5a" strokeWidth=".7" fill="none" />
    <path d="M64 92l2-14 1 13 2-19 1 20" stroke="#f0506a" strokeWidth=".8" fill="none" />
    <path d="M74 92l1.500-14 1 14" stroke="#fecb52" strokeWidth=".7" fill="none" />
    <path d="M36 92.500h42" stroke="#a97a70" strokeWidth="1.300" />
    <path d="M16 96.500h3M24 96.500h4M33 96.500h4M41 96.500h4M50 96.500h3M58 96.500h3M66 96.500h4M74 96.500h3M41 100.500h12" stroke="#9aa6b8" strokeWidth=".8" />
    <g strokeWidth=".7"><path d="M80 71.500h3" stroke="#fde032" /><path d="M80 77.500h3" stroke="#90ee90" /><path d="M80 82.500h3" stroke="#66f" /><path d="M80 85.500h3M80 88.500h3" stroke="#fecb52" /><path d="M80 92h3M80 95.500h3" stroke="#ff9a9a" /></g>
    <path d="M83.500 71.500h9M83.500 77.500h12M83.500 82.500h13M83.500 85.500h11" stroke="#a8b2c2" strokeWidth=".8" />
    <path d="M83.500 74.500h15M83.500 80h14M83.500 88.500h8M83.500 91.500h6M83.500 95h6" stroke="#d8dbe2" strokeWidth=".8" />
    <Lines y={104.5} n={4} x={19} w={70} last={62} opacity={0.75} />
  </ThumbFrame>
);
const Thumb6 = () => (
  <ThumbFrame>
    <path d="M6 14.500h23" stroke="#333" strokeWidth="1.200" strokeDasharray="4 .3" />
    <Lines y={19} n={5} last={70} />
    <path d="M7 27.500h36" stroke="#174a80" strokeWidth="1.400" />
    <rect x="6" y="33" width="96" height="31" fill="#8f9192" />
    <path d="M8 38h90M8 40.500h63" stroke="#8a5656" strokeWidth=".8" strokeDasharray="4 .7 2 .6" />
    <path d="M8 45h18M8 47.500h55M8 52h18M8 54.500h55M8 59h18M8 61.500h55" stroke="#56605a" strokeWidth=".8" strokeDasharray="4 .7 2 .6" />
    <Lines y={67.5} n={2} x={19} w={70} last={60} opacity={0.75} />
    <Lines y={75.5} n={12} last={46} />
    <path d="M30 80.500h36" stroke="#174a80" strokeWidth="1.400" />
  </ThumbFrame>
);
const Thumb7 = () => (
  <ThumbFrame>
    <g fill="#a3a5a6" stroke="#6b6d6e" strokeWidth=".5"><rect x="11" y="13.500" width="40" height="28" /><rect x="56" y="13.500" width="41" height="28" /></g>
    <path d="M15.500 38V28l4-4 9 6 8-10 4 3h4.500V38z" fill="#1f4468" />
    <path d="M61 38V28l4-4 8 6 5-3V38zM82 38V20.500l4 2 5 0V38z" fill="#1f4468" />
    <path d="M15.500 28l4-4 9 6 8-10 4 3h4M61 28l4-4 8 6 5-4 4-6 4 3h5" stroke="#9a7650" strokeWidth=".7" fill="none" />
    <Lines y={43.5} n={3} x={19} w={70} last={42} opacity={0.75} />
    <rect x="6" y="52.500" width="96" height="10" fill="#8f9192" />
    <path d="M6 54.500h33" stroke="#3e6b42" strokeWidth=".9" strokeDasharray="4 .7" />
  </ThumbFrame>
);

/* ---------- taskbar icons ---------- */
const Moon = () => (
  <svg width="28" height="34" viewBox="0 0 28 34">
    <defs><linearGradient id="moon" x1="0" y1="0" x2="0" y2="1"><stop offset="0" stopColor="#fbc64a" /><stop offset="1" stopColor="#e8801c" /></linearGradient></defs>
    <path d="M24 9c0 12-10 13-22 11.500C4 25 8.500 28 13.500 27.800 21 27.500 26 20 24 9z" fill="url(#moon)" />
    <circle cx="20" cy="7.800" r="7.800" fill="#c42b1c" />
    <text x="20" y="11.800" fontSize="11.500" fill="#fff" textAnchor="middle">1</text>
  </svg>
);
const WinLogo = () => (
  <svg width="23" height="23" viewBox="0 0 23 23">
    <defs><linearGradient id="win" x1="0" y1="0" x2="1" y2="1"><stop offset="0" stopColor="#8be0ff" /><stop offset="1" stopColor="#0a96f5" /></linearGradient></defs>
    <path d="M0 0h11v11H0zM12 0h11v11H12zM0 12h11v11H0zM12 12h11v11H12z" fill="url(#win)" />
  </svg>
);
const EdgeLogo = () => (
  <svg width="24" height="24" viewBox="0 0 24 24">
    <defs>
      <linearGradient id="eg" x1="0" y1="0" x2="1" y2=".3"><stop offset="0" stopColor="#2bb5ea" /><stop offset=".6" stopColor="#35c8c0" /><stop offset="1" stopColor="#6be35a" /></linearGradient>
      <linearGradient id="eb" x1="0" y1="0" x2="0" y2="1"><stop offset="0" stopColor="#1a9be8" /><stop offset="1" stopColor="#0c5fc0" /></linearGradient>
    </defs>
    <path d="M.3 11C1 4.500 6 0 12 0c7 0 12 5 12 10.500 0 4-3 6-6.500 6-2.500 0-3.700-1-3.700-2 0-1 .9-1.300.9-3C14.700 8.500 11.500 7 8.500 7 4 7 1 9 .3 11z" fill="url(#eg)" />
    <path d="M.2 11C1.200 8 4.500 6.700 8 7c3.500.2 6.500 2 6.700 4.500-3-2-6.500 0-6.500 4 0 4 3.500 7.500 7.300 7.900C8 25.500-1 20 .2 11z" fill="url(#eb)" />
    <path d="M8.200 15.500c0-3 2-5 4.600-4.800-1 1.300-1.300 5.800 5 6.500 2 .2 3.500-.5 4.500-1-1 3-4.500 7-8 7.300-3.400-.5-6.100-4-6.100-8z" fill="#114a8b" />
  </svg>
);
const ChromeLogo = () => (
  <svg width="24" height="24" viewBox="-12 -12 24 24">
    <circle r="12" fill="#fbc116" />
    <path d="M-10.390 -6A12 12 0 0 1 10.390 -6H0A6 6 0 0 0 -5.200 3z" fill="#e33b2e" />
    <path d="M-10.390 -6A12 12 0 0 0 0 12L5.200 3A6 6 0 0 1 -5.200 3z" fill="#229342" />
    <circle r="6" fill="#fff" /><circle r="4.800" fill="#2a7cf0" />
  </svg>
);

const TABS = [
  { icon: <Board />, t: 'Physics 121 - Homework', w: 130, ls: -0.35 },
  { icon: <ChromeGray />, t: 'New Tab', w: 46 },
  { icon: <Slides />, t: 'Use_cases_GEOGloWS.pptx -', w: 154, fade: true },
  { icon: <Docs />, t: 'Guatemala_LakeAtitlan_Alm', w: 154, fade: true },
  { icon: <Sites />, t: 'Stories - Guatemala', w: 107 },
  { icon: <YLogo />, t: 'Microsoft Word - Lake_Atitla', w: 154, fade: true, active: true, ls: -0.24 },
];
const BOOKMARKS = [
  { icon: <YBox />, t: 'mybyu', w: 37 },
  { icon: <Outlook />, t: 'byu email', w: 53 },
  { icon: <Board />, t: 'Physics 121 - Dashb...', w: 114, ls: -0.28 },
  { icon: <YLogo />, t: 'Canvas', w: 38 },
  { icon: <Bars />, t: 'Your Courses | Gra...', w: 109, ls: -0.32 },
  { icon: <Cengage />, t: 'cengage login', w: 77 },
  { icon: <Docs />, t: 'world civ to 1500 (...', w: 109, ls: -0.14 },
  { icon: <Docs />, t: 'BoM - Google Docs', w: 108, ls: -0.07 },
  { icon: <Folder />, t: 'BE Mentorship', w: 80, gap: 8 },
];

export default function App() {
  return (
    <>
      <Global />
      <Screen>
        <TabStrip>
          <TabSearch>
            <svg width="10" height="6" viewBox="0 0 10 6"><path d="M1 1l4 4 4-4" fill="none" stroke={DARK} strokeWidth="1.900" /></svg>
          </TabSearch>
          {TABS.map((tab, i) => (
            <Tab key={tab.t} $active={tab.active}>
              <TabIcon>{tab.icon}</TabIcon>
              <Text $w={tab.w} $fade={tab.fade} $ls={tab.ls || -0.28}>{tab.t}</Text>
              <TabClose $active={tab.active}><Cross /></TabClose>
              {i < 4 && <TabRule />}
            </Tab>
          ))}
          <NewTab><Plus size={10} stroke={DARK} w={1.9} /></NewTab>
          <WindowButton><svg width="10" height="12"><path d="M0 6.500h10" stroke="#111" /></svg></WindowButton>
          <WindowButton>
            <svg width="11" height="11" viewBox="0 0 11 11" fill="none" stroke="#111"><rect x=".5" y="2.500" width="8" height="8" rx="1.500" /><path d="M3 .500h5a2.500 2.500 0 0 1 2.500 2.500v5" /></svg>
          </WindowButton>
          <WindowButton><Cross size={11} stroke="#111" w={0.8} /></WindowButton>
        </TabStrip>

        <NavBar>
          <NavIcon><Glyph d={PATH.back} fill="#87a3a1" /></NavIcon>
          <NavIcon><Glyph d={PATH.forward} fill="#87a3a1" /></NavIcon>
          <NavIcon><Glyph d={PATH.reload} /></NavIcon>
          <Omnibox>
            <SiteInfo>
              <svg width="13" height="12" viewBox="0 0 13 12" fill="none" stroke={DARK} strokeWidth="1.500">
                <circle cx="2.600" cy="3" r="1.600" /><path d="M6.500 3H12M.5 9H6" /><circle cx="10" cy="9" r="1.600" />
              </svg>
            </SiteInfo>
            <Text $size={13.6} $ls={-0.22} $color="#10201f">scholarsarchive.byu.edu</Text>
            <Text $size={13.6} $ls={-0.18} $color="#5e6b6a">/cgi/viewcontent.cgi?article=1113&amp;context=openwater</Text>
            <StarSlot><Glyph d={PATH.star} size={18} fill="#5a6665" /></StarSlot>
          </Omnibox>
          <NavIcon $w={52} $align="center">
            <svg width="16" height="16" viewBox="0 0 16 16" fill="none" stroke="#f8403c" strokeWidth="3">
              <path d="M.5 2.500h8.500M4.500 2v9.500" /><path d="M9 15.500V7" /><circle cx="11.200" cy="8.700" r="2.400" strokeWidth="2.500" />
            </svg>
          </NavIcon>
          <NavIcon $w={20} $align="center">
            <svg width="18" height="18" viewBox="0 0 18 18" fill="none" stroke={DARK} strokeWidth="1.900">
              <path d="M2 3.500h12.500v12.500H2v-4a2.300 2.300 0 0 0 0-4.500z" strokeLinejoin="round" />
              <path d="M6.200 3.200a2 2 0 0 1 4 0M14.800 7.500a2 2 0 0 1 0 4z" fill={DARK} strokeWidth="1" />
            </svg>
          </NavIcon>
          <NavIcon $w={34} $align="center"><Rule /></NavIcon>
          <NavIcon $w={20} $align="center"><Glyph d={PATH.queue} /></NavIcon>
          <NavIcon $w={52} $align="center">
            <svg width="14" height="15" viewBox="0 0 14 15"><rect x=".9" y="1" width="12.200" height="13" rx="1" fill="none" stroke={DARK} strokeWidth="1.800" /><path d="M8 1h5v13H8z" fill={DARK} /></svg>
          </NavIcon>
          <NavIcon $w={20}><Avatar>L</Avatar></NavIcon>
          <NavIcon $w={52} $align="center"><Glyph d={PATH.dots} /></NavIcon>
        </NavBar>

        <BookmarkBar>
          {BOOKMARKS.map((b) => (
            <Bookmark key={b.t} $gap={b.gap}>
              {b.icon}
              <Text $w={b.w} $ls={b.ls || -0.22}>{b.t}</Text>
            </Bookmark>
          ))}
          <BookmarkEnd>
            <Rule />
            <Folder />
            <Text $w={79} $ls={-0.2}>All Bookmarks</Text>
          </BookmarkEnd>
        </BookmarkBar>

        <PdfBar>
          <svg width="16" height="12" viewBox="0 0 16 12"><path d="M0 1h16M0 6h16M0 11h16" stroke="#f1f1f1" strokeWidth="2" /></svg>
          <PdfTitle><PdfTitleText $size={13.8} $ls={-0.4} $color="#fff">Microsoft Word - Lake_Atitlan_OpenWater_Submission_REVISED_1.docx</PdfTitleText></PdfTitle>
          <PdfField $w={24}><Text $size={13} $color="#fff">5</Text></PdfField>
          <Gap $w={4} />
          <Text $size={13} $w={25} $color="#fff">/ 10</Text>
          <PdfRule $l={19} $r={14} />
          <svg width="12" height="12"><path d="M0 6h12" stroke="#e8e8e8" strokeWidth="2" /></svg>
          <Gap $w={14} />
          <PdfField $w={44}><Text $size={13} $ls={-0.4} $color="#fff">100%</Text></PdfField>
          <Gap $w={14} />
          <Plus size={12} stroke="#e8e8e8" w={1.9} />
          <PdfRule $l={14} $r={19} />
          <svg width="18" height="16" viewBox="0 0 18 16"><rect x=".9" y=".9" width="16.200" height="14.200" rx="1.200" fill="none" stroke="#f1f1f1" strokeWidth="1.800" /><path d="M9 2.800l2.500 3h-5zM9 13.200l2.500-3h-5z" fill="#f1f1f1" /></svg>
          <Gap $w={13} />
          <Glyph d={PATH.rotate} size={20} fill="#f1f1f1" />
          <PdfActions>
            <Glyph d={PATH.download} fill="#f1f1f1" />
            <Glyph d={PATH.print} fill="#f1f1f1" />
            <Glyph d={PATH.dots} fill="#f1f1f1" size={18} />
          </PdfActions>
        </PdfBar>

        <Viewer>
          <ThumbRail>
            <ThumbCell $shift={-137}><ThumbPage /><ThumbLabel>3</ThumbLabel></ThumbCell>
            <ThumbCell><ThumbPage><Thumb4 /></ThumbPage><ThumbLabel>4</ThumbLabel></ThumbCell>
            <ThumbCell><ThumbPage $current><Thumb5 /></ThumbPage><ThumbLabel>5</ThumbLabel></ThumbCell>
            <ThumbCell><ThumbPage><Thumb6 /></ThumbPage><ThumbLabel>6</ThumbLabel></ThumbCell>
            <ThumbCell><ThumbPage><Thumb7 /></ThumbPage></ThumbCell>
          </ThumbRail>
          <ScrollTrack><Arrow up /><ScrollThumb $h={226} $top={186} /><Arrow /></ScrollTrack>
          <Canvas>
            <Paper>
              <MapApp>
                <MapSide>
                  <MapButton $first>Zoom to Lat/Lon Coordinates</MapButton>
                  <MapButton>Remove Map Marker</MapButton>
                  <MapButton>Switch to ESRI Map</MapButton>
                  <MapLabel>Stream Gauge Networks</MapLabel>
                  <MapSelect>
                    Choose A Gauge Network
                    <svg width="6" height="4" viewBox="0 0 6 4"><path d="M.8 .8L3 3 5.200 .8" fill="none" stroke="#333" /></svg>
                  </MapSelect>
                </MapSide>
                <MapMain>
                  <MapDrawing />
                  <MapFooter><AboutButton>About the Map Data</AboutButton></MapFooter>
                </MapMain>
              </MapApp>
              <Chart />
              <Caption>
                <CaptionLine>Figure 3. The GEOGloWS ECMWF Global Streamflow Prediction Service</CaptionLine>
                <CaptionLine>(GSPS) is incorporated into web applications (top) that provide an interface</CaptionLine>
                <CaptionLine $tight>to access streamflow data anywhere in the world. The service uses 51 ensemble</CaptionLine>
                <CaptionLine $last>predictions (bottom) to convey the uncertainty in a forecasted model.</CaptionLine>
              </Caption>
            </Paper>
          </Canvas>
          <ScrollTrack><Arrow up /><ScrollThumb $h={40} $top={280} /><Arrow /></ScrollTrack>
        </Viewer>

        <Taskbar>
          <Weather>
            <Moon />
            <Stack><Text $color="#fff" $ls={-0.35}>56°F</Text><Text $color="#c8c8c8" $ls={-0.3}>Clear</Text></Stack>
          </Weather>
          <StartSlot><WinLogo /></StartSlot>
          <SearchPill>
            <svg width="16" height="16" viewBox="0 0 16 16" fill="none" stroke="#2b2b2b" strokeWidth="1.700"><circle cx="7" cy="6.800" r="5.600" /><path d="M11 11l4 4.200" /></svg>
            <Text $size={14} $ls={-0.4} $color="#6a6a6a">Search</Text>
          </SearchPill>
          <TaskItem>
            <svg width="24" height="22" viewBox="0 0 24 22"><rect x="6" y="0" width="18" height="16" fill="#f1f1f1" /><rect x="0" y="6" width="18" height="16" fill="#6e6e6e" /><rect x="6" y="6" width="12" height="10" fill="#b5b5b5" /></svg>
          </TaskItem>
          <TaskItem>
            <svg width="24" height="24" viewBox="0 0 24 24">
              <defs><linearGradient id="chat" x1="0" y1="1" x2="1" y2="0"><stop offset="0" stopColor="#4f52b8" /><stop offset=".6" stopColor="#6a62c4" /><stop offset="1" stopColor="#8fb8e8" /></linearGradient></defs>
              <path d="M12 .8a11.200 11.200 0 1 1-5 21.300L.8 23.500l1-5.500A11.200 11.200 0 0 1 12 .8z" fill="url(#chat)" />
              <rect x="5.500" y="7" width="9.500" height="9.500" rx="1" fill="#fff" /><path d="M16 10l3-2v8l-3-2z" fill="#fff" />
            </svg>
          </TaskItem>
          <TaskItem $bg="#452828" $mark="#ff9aa2"><EdgeLogo /></TaskItem>
          <TaskItem>
            <svg width="24" height="21" viewBox="0 0 24 21"><path d="M0 0h8l2.500 3v3H0z" fill="#d99a10" /><path d="M0 5l10-1.500L24 2v19H0z" fill="#fcc934" /><path d="M4 21v-4a2.500 2.500 0 0 1 2.500-2.500h11A2.500 2.500 0 0 1 20 17v4z" fill="#1273c8" /></svg>
          </TaskItem>
          <TaskItem>
            <svg width="23" height="24" viewBox="0 0 23 24">
              <path d="M6 6V1.800h11V6" fill="none" stroke="#29a8e8" strokeWidth="2" />
              <rect y="5" width="23" height="18.500" rx="2.500" fill="#f2f2f2" />
              <path d="M7 9.500h4v4H7z" fill="#f25022" /><path d="M12 9.500h4v4h-4z" fill="#7fba00" /><path d="M7 14.800h4v4H7z" fill="#00a4ef" /><path d="M12 14.800h4v4h-4z" fill="#ffb900" />
            </svg>
          </TaskItem>
          <TaskItem>
            <svg width="30" height="36" viewBox="-1 0 30 36">
              <circle cx="13" cy="17" r="11" fill="#1191d0" stroke="#e8f6ff" strokeWidth="1.800" />
              <path d="M8.500 14c0-6 9.500-5.500 9.500-.8 0 3.400-4.200 3.200-4.200 6.600" fill="none" stroke="#fff" strokeWidth="3" /><circle cx="13.700" cy="23.300" r="1.800" fill="#fff" />
              <circle cx="22" cy="8" r="7.800" fill="#fdbf11" />
            </svg>
          </TaskItem>
          <TaskItem>
            <svg width="22" height="25" viewBox="0 0 22 25"><path d="M0 .5l11 5 11-5v18.500l-11 5.500L0 19z" fill="#c02a2e" /><path d="M5 7.500l6 3 6-3v8.500l-6 3.300L5 16z" fill="#202020" /></svg>
          </TaskItem>
          <TaskItem $mark="#8d8d8d">
            <svg width="30" height="26" viewBox="-1 0 30 26">
              <circle cx="14.500" cy="6" r="4" fill="#7b83eb" /><circle cx="22" cy="7" r="3" fill="#5059c9" />
              <path d="M18 10h8.500v8a4 4 0 0 1-6 3.500z" fill="#5059c9" /><path d="M9 10h12v8a6 6 0 0 1-12 0z" fill="#7b83eb" />
              <rect x="1" y="8" width="13" height="12" rx="1" fill="#4b53bc" /><path d="M4.500 11h6M7.500 11v6.500" stroke="#fff" strokeWidth="1.600" />
              <circle cx="24.200" cy="5" r="4.300" fill="#7fb900" stroke="#fff" /><path d="M22 5l1.600 1.700 2.800-3.200" fill="none" stroke="#fff" strokeWidth="1.200" />
            </svg>
          </TaskItem>
          <TaskItem $bg="#2f2f2f" $mark="#4cc2ff" $mw={16}><ChromeLogo /></TaskItem>
          <Tray>
            <svg width="12" height="7" viewBox="0 0 12 7"><path d="M1 6l5-5 5 5" fill="none" stroke="#fff" strokeWidth="1.500" /></svg>
            <Gap $w={17} />
            <svg width="17" height="11" viewBox="0 0 17 11"><path d="M3.500 8a4.500 4.500 0 0 1 1-6A5 5 0 0 1 12 2.500L14 5z" fill="#9a9a9a" /><path d="M3 10.800a3 3 0 0 1 0-5.800c3-.5 5 .5 7 1 2-1.500 6 .200 6.500 2.500 0 1.500-1 2.300-2.500 2.300z" fill="#f2f2f2" /></svg>
            <Gap $w={15} />
            <svg width="17" height="13" viewBox="0 0 17 13" fill="none" stroke="#fff" strokeWidth="1.200"><path d="M1 4.800a10.500 10.500 0 0 1 15 0M3.200 7.200a7.500 7.500 0 0 1 10.600 0M5.400 9.500a4.400 4.400 0 0 1 6.200 0" /><circle cx="8.500" cy="11.300" r="1.200" fill="#fff" stroke="none" /></svg>
            <Gap $w={7} />
            <svg width="16" height="12" viewBox="0 0 16 12" fill="none" stroke="#fff" strokeWidth="1.100"><path d="M.6 4h2.600L6.800.8v10.400L3.200 8H.6zM10 3.500l5 5M15 3.500l-5 5" /></svg>
            <Gap $w={9} />
            <svg width="17" height="10" viewBox="0 0 17 10"><rect x=".6" y=".6" width="13.500" height="8.800" rx="2" fill="none" stroke="#fff" strokeWidth="1.200" /><rect x="2.300" y="2.300" width="5" height="5.400" fill="#fff" /><path d="M15.300 3.200v3.600" stroke="#fff" strokeWidth="1.500" /></svg>
            <Gap $w={15} />
            <Stack $align="flex-end"><Text $color="#fff" $ls={-0.3}>9:00 PM</Text><Text $color="#fff" $ls={-0.1}>10/19/2023</Text></Stack>
            <Gap $w={8} />
            <svg width="13" height="15" viewBox="0 0 13 15" fill="#8ee6ff"><path d="M6.500 0a4.800 4.800 0 0 1 4.800 4.800V9l1.500 2.500H.2L1.700 9V4.800A4.800 4.800 0 0 1 6.500 0zM4.500 13h4a2 2 0 0 1-4 0z" /></svg>
          </Tray>
        </Taskbar>
      </Screen>
    </>
  );
}
